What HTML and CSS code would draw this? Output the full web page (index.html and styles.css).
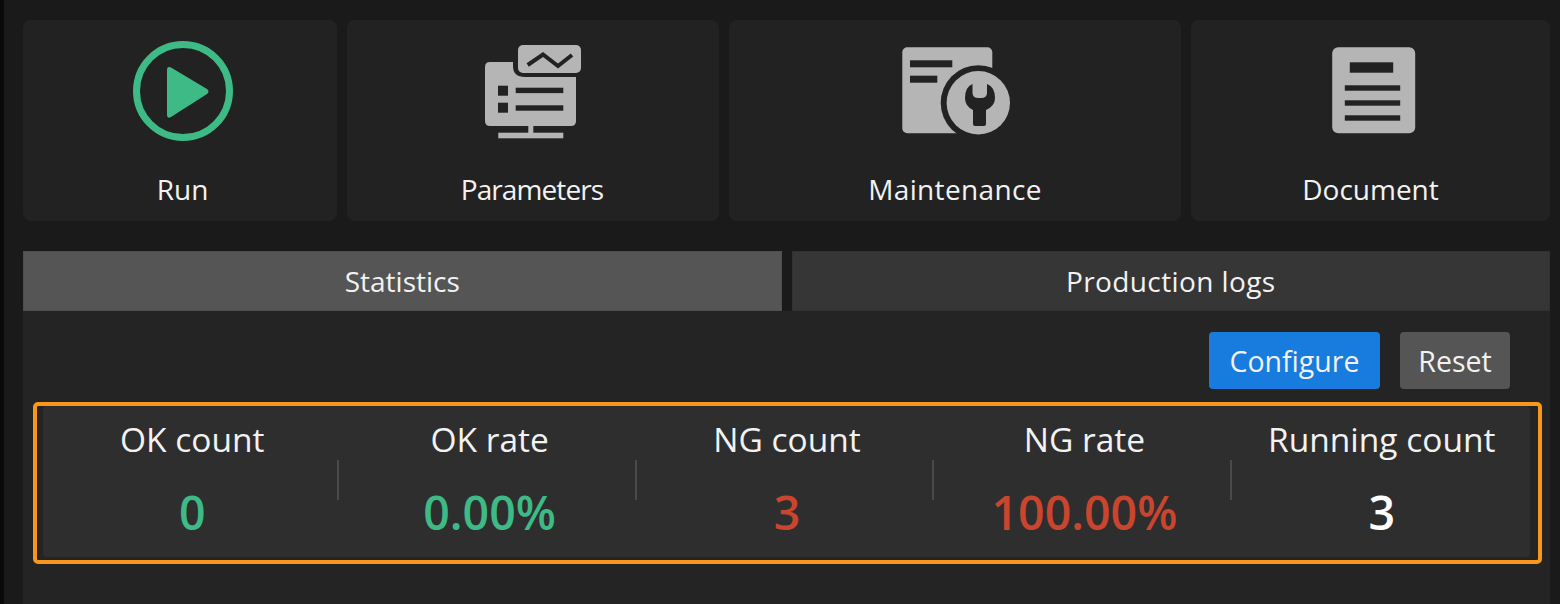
FILE: index.html
```html
<!DOCTYPE html>
<html lang="en">
<head>
<meta charset="utf-8">
<title>Statistics</title>
<link rel="stylesheet" href="styles.css">
</head>
<body>
<div class="app">
  <nav class="cards">
    <div class="card card-run">
      <svg class="icon" viewBox="133 41 100 100" aria-hidden="true">
        <circle cx="183" cy="91" r="46.5" fill="none" stroke="#3dba85" stroke-width="7"/>
        <path d="M171 67.500 L207 89 Q210 91.500 207 94 L171 117 Q167 119 167 115 L167 70 Q167 66 171 67.500Z" fill="#3dba85"/>
      </svg>
      <span class="card-label">Run</span>
    </div>
    <div class="card">
      <svg class="icon" viewBox="483 41 100 100" aria-hidden="true">
        <path d="M490 62 H513 V66 Q513 77 525 77 H576 V121 Q576 126 571 126 H490 Q485 126 485 121 V67 Q485 62 490 62Z" fill="#b5b5b5"/>
        <rect x="518" y="45" width="63" height="28" rx="5" fill="#b5b5b5"/>
        <path d="M527.700 65 L543 54.500 L558 66 L572 55" fill="none" stroke="#222" stroke-width="4"/>
        <rect x="498" y="85.700" width="10" height="10" fill="#222"/>
        <rect x="498" y="102.700" width="10" height="10" fill="#222"/>
        <rect x="515.700" y="87.700" width="47.600" height="5.400" fill="#222"/>
        <rect x="515.700" y="105.300" width="47.600" height="5.400" fill="#222"/>
        <rect x="528.300" y="126" width="5" height="8" fill="#b5b5b5"/>
        <rect x="498.300" y="132.700" width="65" height="5.600" fill="#b5b5b5"/>
      </svg>
      <span class="card-label card-label-tight">Parameters</span>
    </div>
    <div class="card">
      <svg class="icon" viewBox="905 41 100 100" aria-hidden="true">
        <rect x="902.300" y="47.300" width="90" height="86" rx="5" fill="#b5b5b5"/>
        <rect x="910" y="60.300" width="42.300" height="7" fill="#222"/>
        <rect x="910" y="75.700" width="27.300" height="7" fill="#222"/>
        <circle cx="978.300" cy="102.800" r="37.600" fill="#222"/>
        <circle cx="978.300" cy="102.800" r="31.700" fill="#b5b5b5"/>
        <path d="M972.500 84 V93 Q972.500 98 978.500 98 H981 Q987 98 987 93 V84 Q995 87 995 98 Q995 106 986 110 V124 Q986 126 984 126 H975 Q973 126 973 124 V110 Q965 106 965 98 Q965 87 972.500 84Z" fill="#222"/>
      </svg>
      <span class="card-label card-label-wide">Maintenance</span>
    </div>
    <div class="card">
      <svg class="icon" viewBox="1320.500 41 100 100" aria-hidden="true">
        <rect x="1331.700" y="47.300" width="83" height="86" rx="6" fill="#b5b5b5"/>
        <rect x="1349.300" y="62.300" width="43.400" height="10.400" fill="#222"/>
        <rect x="1344.300" y="85.300" width="55.400" height="5.400" fill="#222"/>
        <rect x="1344.300" y="100.300" width="55.400" height="5.400" fill="#222"/>
        <rect x="1344.300" y="115.300" width="55.400" height="5.400" fill="#222"/>
      </svg>
      <span class="card-label">Document</span>
    </div>
  </nav>
  <div class="tabs">
    <div class="tab tab-active">Statistics</div>
    <div class="tab tab-wide">Production logs</div>
  </div>
  <section class="panel">
    <div class="toolbar">
      <button class="btn btn-primary" type="button">Configure</button>
      <button class="btn btn-plain" type="button">Reset</button>
    </div>
    <div class="highlight">
      <div class="stats">
        <div class="stat"><span class="stat-label">OK count</span><span class="stat-value ok">0</span></div>
        <div class="stat"><span class="stat-label">OK rate</span><span class="stat-value ok">0.00%</span></div>
        <div class="stat"><span class="stat-label">NG count</span><span class="stat-value ng">3</span></div>
        <div class="stat"><span class="stat-label">NG rate</span><span class="stat-value ng">100.00%</span></div>
        <div class="stat stat-last"><span class="stat-label">Running count</span><span class="stat-value">3</span></div>
      </div>
    </div>
  </section>
</div>
</body>
</html>
```
FILE: styles.css
```css
* { box-sizing: border-box; }
html, body { margin: 0; height: 100%; }
body {
  background: #1a1a1a;
  color: #f2f2f2;
  font-family: "Open Sans", "Noto Sans", sans-serif;
  overflow: hidden;
}
.app {
  height: 604px;
  border-left: 4px solid #0a0a0a;
  padding: 20px 10px 0 19px;
  display: flex;
  flex-direction: column;
}
.cards {
  display: grid;
  grid-template-columns: 314px 372px 452px 1fr;
  gap: 10px;
}
.card {
  height: 201px;
  background: #222;
  border-radius: 8px;
  padding-top: 21px;
  display: flex;
  flex-direction: column;
  align-items: center;
}
.card-run { padding-left: 5px; }
.icon { width: 100px; height: 100px; display: block; overflow: visible; }
.card-label { font-size: 28px; line-height: 38px; margin-top: 29px; }
.card-label-tight { letter-spacing: -0.9px; padding-right: 2px; }
.card-label-wide { letter-spacing: 0.35px; }
.tabs {
  margin-top: 30px;
  display: grid;
  grid-template-columns: 1fr 1fr;
  gap: 10px;
}
.tab {
  height: 60px;
  background: #363636;
  box-shadow: inset 0 0 0 1px rgba(0, 0, 0, 0.08);
  font-size: 28px;
  line-height: 60px;
  text-align: center;
}
.tab-active { background: #555; }
.tab-wide { letter-spacing: 0.4px; }
.panel { flex: 1; background: #242424; }
.toolbar {
  display: flex;
  justify-content: flex-end;
  gap: 20px;
  padding: 21px 40px 0;
}
.btn {
  height: 57px;
  border: 0;
  border-radius: 4px;
  color: #f2f2f2;
  font: inherit;
  font-size: 28.5px;
  padding: 0;
}
.btn-primary { width: 171px; background: #187bde; }
.btn-plain { width: 110px; background: #555; }
.highlight {
  margin: 13px 8px 0 10px;
  height: 162px;
  border: 4px solid #f7981d;
  border-radius: 5px;
  padding: 0 8px 3px 6px;
}
.stats {
  height: 100%;
  background: #2e2e2e;
  border-radius: 4px;
  display: grid;
  grid-template-columns: repeat(5, 1fr);
}
.stat {
  position: relative;
  display: flex;
  flex-direction: column;
  align-items: center;
  padding: 10px 0 0 1px;
}
.stat::after {
  content: "";
  position: absolute;
  right: 1px;
  top: 54px;
  width: 2px;
  height: 40px;
  background: #4a4a4a;
}
.stat-last::after { display: none; }
.stat-label { font-size: 33.5px; line-height: 46px; }
.stat-value { font-size: 46.5px; font-weight: 600; line-height: 60px; margin-top: 20px; color: #fff; }
.ok { color: #3dba85; }
.ng { color: #c9452e; }
```
